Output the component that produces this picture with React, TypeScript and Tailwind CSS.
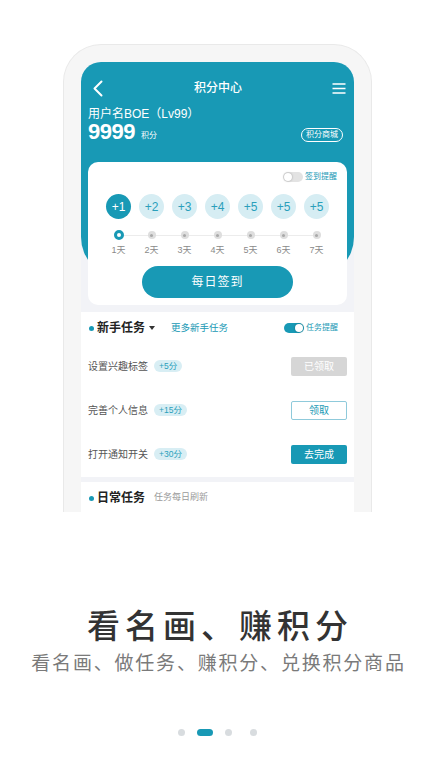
import type { ReactElement } from 'react'

const font = { fontFamily: '"Liberation Sans","Noto Sans CJK SC",sans-serif' }

const days = [
  { v: '+1', d: '1天' },
  { v: '+2', d: '2天' },
  { v: '+3', d: '3天' },
  { v: '+4', d: '4天' },
  { v: '+5', d: '5天' },
  { v: '+5', d: '6天' },
  { v: '+5', d: '7天' },
]

function Toggle({ on }: { on: boolean }): ReactElement {
  return (
    <span
      className={`relative inline-flex h-[10px] w-[20px] shrink-0 items-center rounded-full ${on ? 'bg-[#1899b5]' : 'bg-[#e3e3e3]'}`}
    >
      <span
        className={`absolute top-[1px] h-[8px] w-[8px] rounded-full bg-white shadow-[0_0_2px_rgba(0,0,0,0.35)] ${on ? 'right-[1px]' : 'left-[1px]'}`}
      />
    </span>
  )
}

function TaskRow({ name, pts, action }: { name: string; pts: string; action: 'done' | 'claim' | 'go' }): ReactElement {
  const btn =
    action === 'done'
      ? 'bg-[#d6d6d6] text-white'
      : action === 'claim'
        ? 'border border-[#8fcadb] bg-white text-[#1899b5]'
        : 'bg-[#1899b5] text-white'
  const label = action === 'done' ? '已领取' : action === 'claim' ? '领取' : '去完成'
  return (
    <div className="flex h-[44px] items-center">
      <span className="text-[10px] text-[#555]">{name}</span>
      <span className="ml-[6px] rounded-full bg-[#d8eef4] px-[5px] text-[8.5px] leading-[12px] text-[#2a9fbb]">{pts}</span>
      <span className={`ml-auto flex h-[19px] w-[56px] items-center justify-center rounded-[2px] text-[10px] ${btn}`}>
        {label}
      </span>
    </div>
  )
}

export default function App(): ReactElement {
  return (
    <div className="flex h-[773px] w-full flex-col items-center overflow-hidden bg-white" style={font}>
      <div className="mt-[44px] h-[468px] w-[309px] overflow-hidden rounded-t-[38px] border border-b-0 border-[#e9e9e9] bg-[#f6f6f6] px-[17px] pt-[17px]">
        <div className="h-full overflow-hidden rounded-t-[20px] bg-[#f2f3f7]">
          <div className="h-[216px] rounded-b-[41px] bg-[#1899b5] px-[7px] pt-[6px] text-white">
            <div className="flex h-[40px] items-center justify-between">
              <svg width="12" height="17" viewBox="0 0 12 17" className="ml-[4px]">
                <path d="M9.5 1.5 L2.5 8.5 L9.5 15.5" fill="none" stroke="white" strokeWidth="2" strokeLinecap="round" strokeLinejoin="round" />
              </svg>
              <span className="text-[12px] font-medium">积分中心</span>
              <svg width="14" height="11" viewBox="0 0 14 11" className="mr-[1px]">
                <path d="M0.5 1 H13.5 M0.5 5.5 H13.5 M0.5 10 H13.5" stroke="white" strokeWidth="1.4" />
              </svg>
            </div>
            <div className="text-[12px] leading-[13px]">用户名BOE（Lv99）</div>
            <div className="mt-[1px] flex h-[20px] items-end">
              <span className="text-[22px] font-bold leading-[20px] tracking-[-0.5px]">9999</span>
              <span className="mb-[1px] ml-[6px] text-[8px] leading-[10px]">积分</span>
              <span className="ml-auto mr-[4px] rounded-full border border-white px-[4px] text-[8px] leading-[12px]">
                积分商城
              </span>
            </div>
          </div>

          <div className="mx-[7px] mt-[-116px] rounded-[10px] bg-white px-[14px] pb-[7px] pt-[10px]">
            <div className="flex h-[10px] items-center justify-end">
              <Toggle on={false} />
              <span className="ml-[2px] mr-[-4px] text-[8px] text-[#1899b5]">签到提醒</span>
            </div>
            <div className="mt-[12px] grid grid-cols-7">
              {days.map((x, i) => (
                <div key={i} className="flex justify-center">
                  <span
                    className={`flex h-[25px] w-[25px] items-center justify-center rounded-full text-[12px] ${i === 0 ? 'bg-[#1899b5] text-white' : 'bg-[#d6edf3] text-[#2a9fbb]'}`}
                  >
                    {x.v}
                  </span>
                </div>
              ))}
            </div>
            <div className="relative mt-[11px] grid grid-cols-7">
              <div className="absolute left-[16px] right-[16px] top-[5px] h-px bg-[#ececec]" />
              {days.map((x, i) => (
                <div key={i} className="relative flex h-[10px] items-center justify-center">
                  {i === 0 ? (
                    <span className="h-[10px] w-[10px] rounded-full border-[3px] border-[#1899b5] bg-white" />
                  ) : (
                    <span className="flex h-[8px] w-[8px] items-center justify-center rounded-full bg-[#dedede]">
                      <span className="h-[3px] w-[3px] rounded-full bg-[#a9a9a9]" />
                    </span>
                  )}
                </div>
              ))}
            </div>
            <div className="mt-[4px] grid grid-cols-7">
              {days.map((x, i) => (
                <span key={i} className="text-center text-[9px] leading-[12px] text-[#8a8a8a]">
                  {x.d}
                </span>
              ))}
            </div>
            <div className="mt-[10px] flex justify-center">
              <span className="flex h-[32px] w-[151px] items-center justify-center rounded-full bg-[#1899b5] text-[12px] tracking-[1px] text-white">
                每日签到
              </span>
            </div>
          </div>

          <div className="mt-[7px] bg-white px-[7px] pb-[1px]">
            <div className="flex h-[32px] items-center">
              <span className="ml-[1px] h-[5px] w-[5px] rounded-full bg-[#1899b5]" />
              <span className="ml-[3px] text-[12px] font-bold text-[#222]">新手任务</span>
              <svg width="6" height="4" viewBox="0 0 6 4" className="ml-[4px]">
                <path d="M0 0 H6 L3 4 Z" fill="#333" />
              </svg>
              <span className="ml-[16px] text-[9.5px] text-[#1899b5]">更多新手任务</span>
              <span className="ml-auto flex items-center pr-[9px]">
                <Toggle on />
                <span className="ml-[2px] text-[8px] text-[#1899b5]">任务提醒</span>
              </span>
            </div>
            <TaskRow name="设置兴趣标签" pts="+5分" action="done" />
            <TaskRow name="完善个人信息" pts="+15分" action="claim" />
            <TaskRow name="打开通知开关" pts="+30分" action="go" />
          </div>

          <div className="mt-[5px] bg-white px-[7px]">
            <div className="flex h-[32px] items-center">
              <span className="ml-[1px] h-[5px] w-[5px] rounded-full bg-[#1899b5]" />
              <span className="ml-[3px] text-[12px] font-bold text-[#222]">日常任务</span>
              <span className="ml-[9px] text-[9px] text-[#9a9a9a]">任务每日刷新</span>
            </div>
          </div>
        </div>
      </div>

      <div className="mt-[95px] pl-[5px] text-[33px] font-medium leading-[40px] tracking-[5px] text-[#333]">看名画、赚积分</div>
      <div className="mt-[4px] pl-[2px] text-[19px] leading-[26px] tracking-[1.8px] text-[#7a7a7a]">
        看名画、做任务、赚积分、兑换积分商品
      </div>
      <div className="mt-[52px] flex items-center gap-[12px]">
        <span className="h-[7px] w-[7px] rounded-full bg-[#d8dcdf]" />
        <span className="h-[7px] w-[16px] rounded-full bg-[#1899b5]" />
        <span className="h-[7px] w-[7px] rounded-full bg-[#d8dcdf]" />
        <span className="ml-[6px] h-[7px] w-[7px] rounded-full bg-[#d8dcdf]" />
      </div>
    </div>
  )
}
